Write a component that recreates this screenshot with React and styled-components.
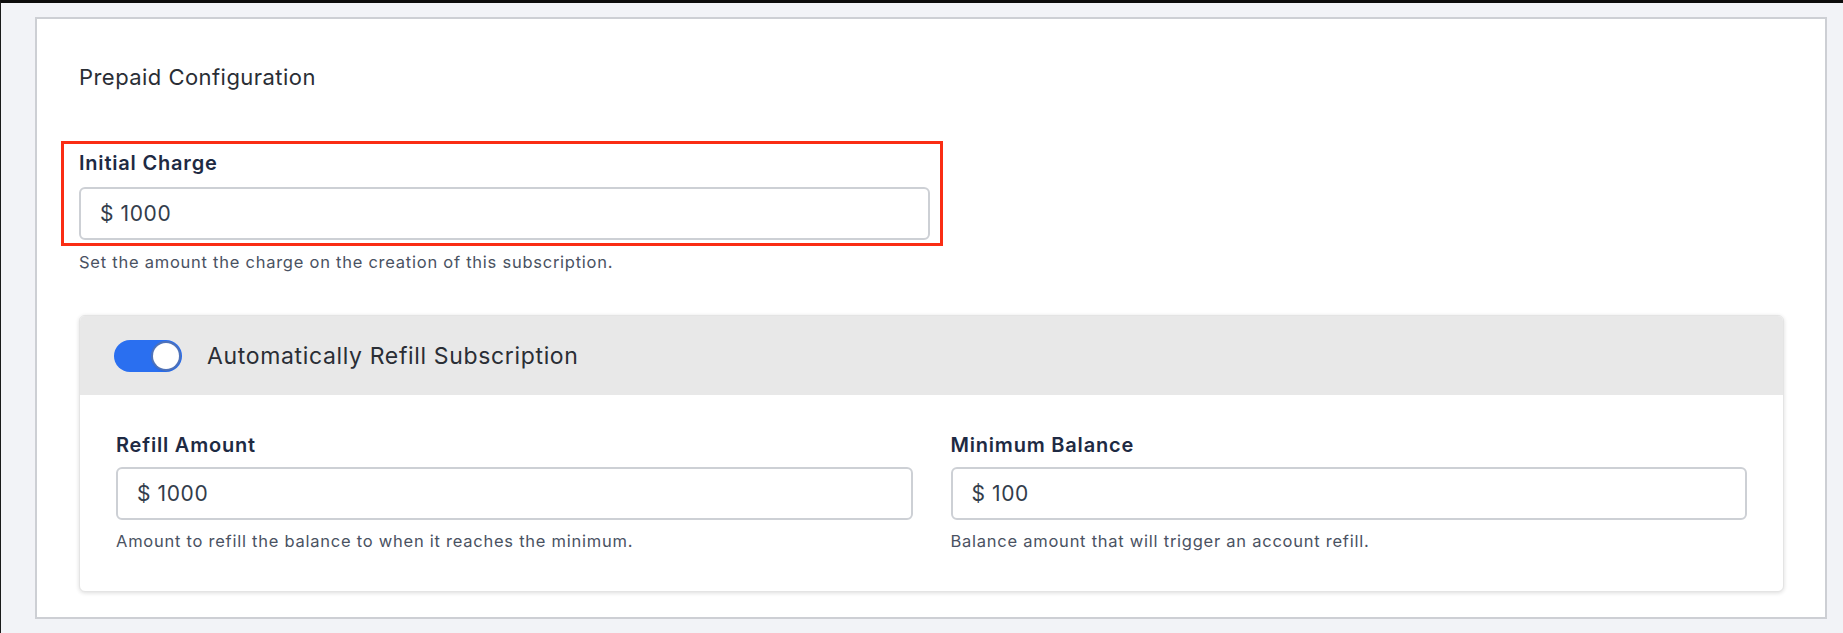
import React from "react";
import styled, { createGlobalStyle } from "styled-components";

const GlobalStyle = createGlobalStyle`
  html, body {
    margin: 0;
    padding: 0;
    background: #f2f3f7;
  }
  body {
    font-family: Inter, "Noto Sans", sans-serif;
    -webkit-font-smoothing: antialiased;
  }
  * {
    box-sizing: border-box;
  }
`;

const Page = styled.div`
  min-height: 633px;
  border-top: 3px solid #0c0c0c;
  border-left: 1px solid #1a1a1a;
  padding: 14px 16px 13px 34px;
`;

const Card = styled.section`
  background: #fff;
  border: 2px solid #cdcfd4;
  padding: 46px 41px 25px 42px;
`;

const Title = styled.h2`
  margin: 0;
  font-size: 22px;
  line-height: 24px;
  font-weight: 400;
  letter-spacing: 0.45px;
  color: #2a2e35;
`;

const Highlight = styled.div`
  width: 882px;
  margin: 52px 0 0 -18px;
  padding: 8px 10px 3px 15px;
  border: 3px solid #fa2d14;
`;

const Label = styled.label`
  display: block;
  font-size: 20px;
  line-height: 22px;
  font-weight: 600;
  letter-spacing: 0.8px;
  color: #1e2a43;
`;

const InputBox = styled.div`
  display: flex;
  align-items: center;
  height: 53px;
  margin-top: ${(p) => p.$top || 13}px;
  padding: 0 19px;
  border: 2px solid #cdd0d5;
  border-radius: 6px;
  background: #fff;
  font-size: 21px;
  letter-spacing: 0.6px;
  color: #333d4c;
`;

const Help = styled.p`
  margin: ${(p) => p.$top || 6}px 0 0;
  font-size: 16.5px;
  line-height: 20px;
  letter-spacing: 0.75px;
  color: #4a5262;
`;

const Panel = styled.div`
  margin-top: 43px;
  border: 1px solid #e4e4e4;
  border-radius: 6px;
  background: #fff;
  box-shadow: 0 1px 4px rgba(0, 0, 0, 0.14);
  overflow: hidden;
`;

const PanelHeader = styled.div`
  display: flex;
  align-items: center;
  gap: 25px;
  height: 79px;
  padding: 0 0 0 34px;
  background: #e8e8e8;
`;

const Toggle = styled.span`
  position: relative;
  display: inline-block;
  width: 68px;
  height: 32px;
  border-radius: 16px;
  background: ${(p) => (p.$on ? "#2a6ff0" : "#c9ccd2")};
  flex-shrink: 0;
`;

const Knob = styled.span`
  position: absolute;
  top: 3px;
  left: ${(p) => (p.$on ? "39px" : "3px")};
  width: 26px;
  height: 26px;
  border-radius: 50%;
  background: #fff;
  box-shadow: 0 0 0 2px #4f72b8, 0 1px 3px rgba(0, 0, 0, 0.35);
`;

const ToggleLabel = styled.span`
  font-size: 23px;
  letter-spacing: 0.65px;
  color: #2a2e35;
`;

const PanelBody = styled.div`
  display: grid;
  grid-template-columns: 1fr 1fr;
  gap: 38px;
  padding: 39px 36px 40px;
`;

const Field = ({ label, value, help }) => (
  <div>
    <Label>{label}</Label>
    <InputBox $top={11}>{value}</InputBox>
    <Help $top={11}>{help}</Help>
  </div>
);

export default function App() {
  return (
    <>
      <GlobalStyle />
      <Page>
        <Card>
          <Title>Prepaid Configuration</Title>
          <Highlight>
            <Label>Initial Charge</Label>
            <InputBox>$ 1000</InputBox>
          </Highlight>
          <Help>Set the amount the charge on the creation of this subscription.</Help>
          <Panel>
            <PanelHeader>
              <Toggle $on>
                <Knob $on />
              </Toggle>
              <ToggleLabel>Automatically Refill Subscription</ToggleLabel>
            </PanelHeader>
            <PanelBody>
              <Field
                label="Refill Amount"
                value="$ 1000"
                help="Amount to refill the balance to when it reaches the minimum."
              />
              <Field
                label="Minimum Balance"
                value="$ 100"
                help="Balance amount that will trigger an account refill."
              />
            </PanelBody>
          </Panel>
        </Card>
      </Page>
    </>
  );
}
